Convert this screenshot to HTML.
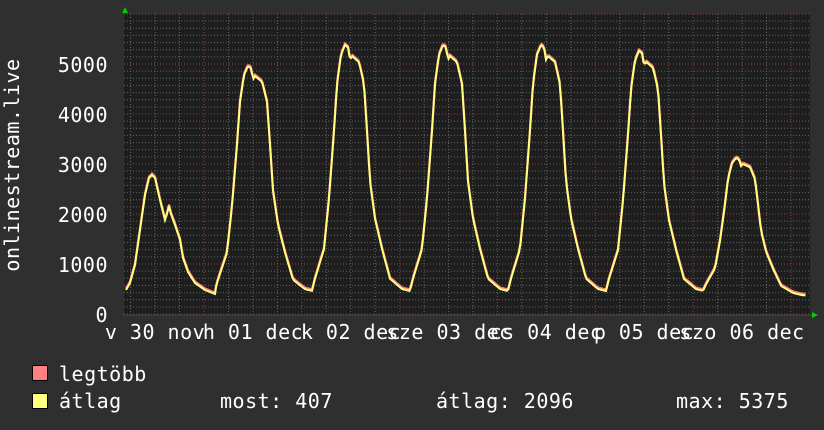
<!DOCTYPE html>
<html><head><meta charset="utf-8"><style>
html,body{margin:0;padding:0;background:#2f2f2f;}
svg{display:block}
text{font-family:"DejaVu Sans Mono","Liberation Mono",monospace;font-size:20px;fill:#fff;letter-spacing:0.5px}
</style></head><body>
<svg id="s" width="824" height="430" xmlns="http://www.w3.org/2000/svg">
<rect width="824" height="430" fill="#2f2f2f"/>
<rect x="124" y="14" width="686" height="301" fill="#1e1e1e"/>
<g id="grid"></g>
<path id="pmax" fill="none" stroke="#ff8080" stroke-width="2.2"/>
<path id="pavg" fill="none" stroke="#ffff80" stroke-width="2"/>
<line x1="122" y1="315" x2="812" y2="315" stroke="#444" stroke-width="1"/>
<polygon points="122,13 128,13 125,7" fill="#00cc00"/>
<polygon points="812,312 812,318 818,315" fill="#00cc00"/>
<g text-anchor="end">
<text x="108" y="322">0</text>
<text x="108" y="272">1000</text>
<text x="108" y="222">2000</text>
<text x="108" y="172">3000</text>
<text x="108" y="122">4000</text>
<text x="108" y="72">5000</text>
</g>
<g text-anchor="middle">
<text x="155" y="339">v 30 nov</text>
<text x="253" y="339">h 01 dec</text>
<text x="351" y="339">k 02 dec</text>
<text x="449" y="339">sze 03 dec</text>
<text x="546" y="339">cs 04 dec</text>
<text x="644" y="339">p 05 dec</text>
<text x="742" y="339">szo 06 dec</text>
</g>
<text transform="translate(19,165) rotate(-90)" text-anchor="middle">onlinestream.live</text>
<rect x="32.5" y="365.5" width="15" height="15" fill="#ff8080" stroke="#000"/>
<rect x="32.5" y="393.5" width="15" height="15" fill="#ffff80" stroke="#000"/>
<text x="59" y="381">legtöbb</text>
<text x="59" y="408">átlag</text>
<text x="220" y="408">most: 407</text>
<text x="436" y="408">átlag: 2096</text>
<text x="676" y="408">max: 5375</text>
</svg>
<script>
var g=document.getElementById('grid'),h='';
for(var i=0;i<=42;i++){var y=314-i*50/7;var maj=i%7==0;
h+='<line x1="124" x2="810" y1="'+y.toFixed(1)+'" y2="'+y.toFixed(1)+'" stroke="'+(maj?'#8a4040':'#666')+'" stroke-width="1" stroke-dasharray="1,2"/>';}
var d0=204,dd=97.83;
for(var x=d0-3*dd/4;x<810;x+=dd/4){var k=Math.round((x-d0)/(dd/4));var maj=(k%4==0);if(x<124)continue;
h+='<line y1="14" y2="315" x1="'+x.toFixed(1)+'" x2="'+x.toFixed(1)+'" stroke="'+(maj?'#8a4040':'#666')+'" stroke-width="1" stroke-dasharray="1,2"/>';}
g.innerHTML=h;
var T=[[-40,0],[-33,0],[-30,0.05],[-21,0.17],[-16,0.376],[-11,0.65],[-8,0.84],[-4,0.96],[0,1],[3,0.99],[5,0.94],[7,0.955],[14,0.93],[19,0.84],[22,0.65],[25,0.445],[30,0.294],[37,0.171],[45,0.05],[57,0.008],[65,0]];
function tf(o){if(o<=T[0][0]||o>=T[T.length-1][0])return 0;for(var i=1;i<T.length;i++){if(o<=T[i][0]){var a=T[i-1],b=T[i];return a[1]+(b[1]-a[1])*(o-a[0])/(b[0]-a[0]);}}return 0;}
var P=[[248,65],[345,44],[443,44],[541,44],[639,50],[736,157]];
var d1=[[126,290],[130,283],[135,265],[140,230],[145,195],[149,178],[152,175],[155,178],[160,200],[165,220],[167,214],[169,206],[171,214],[175,225],[180,240],[183,258],[188,272],[195,283],[205,290],[215,294]];
var pts=d1.slice();
for(var x=216;x<=806;x+=1.5){var m=0;for(var j=0;j<P.length;j++){var v=(290-P[j][1])*tf(x-P[j][0]);if(v>m)m=v;}
var base=x>760?290+(x-760)*0.12:291;pts.push([x,base-m]);}
function path(dy){return 'M'+pts.map(function(p){return p[0].toFixed(1)+','+(p[1]+dy).toFixed(1)}).join(' L');}
document.getElementById('pmax').setAttribute('d',path(-1.5));
document.getElementById('pavg').setAttribute('d',path(0));
</script>
</body></html>
